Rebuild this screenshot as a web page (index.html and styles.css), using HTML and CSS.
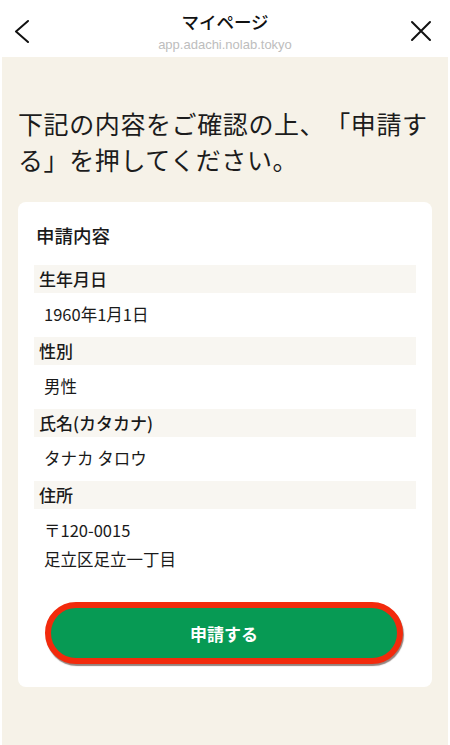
FILE: index.html
```html
<!DOCTYPE html>
<html lang="ja">
<head>
<meta charset="utf-8">
<title>マイページ</title>
<link rel="stylesheet" href="styles.css">
</head>
<body>
<header class="header">
  <div class="icon-cell icon-left">
    <svg class="icon" width="24" height="24" viewBox="0 0 24 24"><path d="M18 2 L6 12.5 L18 23" fill="none" stroke="#111" stroke-width="2" stroke-linecap="round" stroke-linejoin="round"/></svg>
  </div>
  <div class="header-center">
    <div class="header-title">マイページ</div>
    <div class="header-url">app.adachi.nolab.tokyo</div>
  </div>
  <div class="icon-cell icon-right">
    <svg class="icon" width="24" height="24" viewBox="0 0 24 24"><path d="M3 3 L21 21 M21 3 L3 21" fill="none" stroke="#111" stroke-width="2" stroke-linecap="round"/></svg>
  </div>
</header>
<main class="main">
  <h1 class="lead">下記の内容をご確認の上、「申請する」を押してください。</h1>
  <section class="card">
    <h2 class="card-title">申請内容</h2>
    <div class="field-label">生年月日</div>
    <div class="field-value">1960年1月1日</div>
    <div class="field-label">性別</div>
    <div class="field-value">男性</div>
    <div class="field-label">氏名(カタカナ)</div>
    <div class="field-value">タナカ タロウ</div>
    <div class="field-label">住所</div>
    <div class="field-value">〒120-0015<br>足立区足立一丁目</div>
    <button class="submit" type="button">申請する</button>
  </section>
</main>
</body>
</html>
```

FILE: styles.css
```css
* { box-sizing: border-box; }
html, body {
  margin: 0;
  padding: 0;
  background: #ffffff;
}
body {
  width: 450px;
  height: 745px;
  overflow: hidden;
  font-family: "Noto Sans CJK JP", "Noto Sans", sans-serif;
  color: #1a1a1a;
  display: flex;
  flex-direction: column;
  text-spacing-trim: space-all;
}
.header {
  height: 57px;
  flex: none;
  display: grid;
  grid-template-columns: 50px 1fr 50px;
  align-items: start;
  padding-top: 11px;
  background: #ffffff;
}
.icon-cell { padding-top: 8px; }
.icon { display: block; }
.icon-left { padding-left: 10px; }
.icon-right { padding-left: 9px; }
.header-center {
  display: flex;
  flex-direction: column;
  align-items: center;
  gap: 4px;
}
.header-title {
  font-size: 17.5px;
  font-weight: 500;
  line-height: 22px;
  color: #111;
}
.header-url {
  font-family: "Liberation Sans", Arial, sans-serif;
  font-size: 13px;
  line-height: 16px;
  color: #bdbdbd;
}
.main {
  flex: 1;
  margin: 0 2px;
  background: #f6f2e8;
  padding: 48px 16px 0;
}
.lead {
  margin: 0 -10px 25px 0;
  font-size: 25px;
  font-weight: 400;
  letter-spacing: 0.6px;
  line-height: 36px;
  color: #1c1c1c;
  text-spacing-trim: space-all;
}
.card {
  background: #ffffff;
  border-radius: 8px;
  padding: 20px 16px 23px;
}
.card-title {
  margin: 0 0 17px;
  padding-left: 2px;
  font-size: 18.5px;
  font-weight: 500;
  line-height: 26px;
  color: #1a1a1a;
}
.field-label {
  background: #f8f6f1;
  height: 28px;
  line-height: 28px;
  padding-left: 5px;
  font-size: 17px;
  font-weight: 500;
  color: #1a1a1a;
}
.field-value {
  padding: 7px 10px 8px;
  font-size: 16.5px;
  line-height: 29px;
  color: #1a1a1a;
}
.submit {
  display: block;
  width: 358px;
  height: 62px;
  margin: 20px 0 0 11px;
  border: 6px solid #f22a0c;
  border-radius: 999px;
  background: #079a54;
  color: #ffffff;
  font-family: "Noto Sans CJK JP", "Noto Sans", sans-serif;
  font-size: 17px;
  font-weight: 700;
  box-shadow: 1px 2px 1px rgba(60, 30, 20, 0.55);
  padding: 0;
}
```
